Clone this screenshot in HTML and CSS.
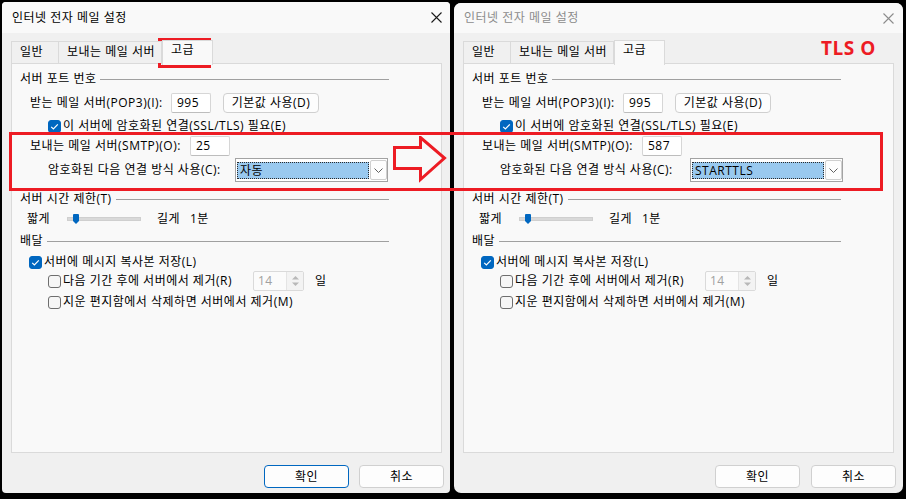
FILE: index.html
```html
<!DOCTYPE html>
<html lang="ko">
<head>
<meta charset="utf-8">
<title>인터넷 전자 메일 설정</title>
<link rel="stylesheet" href="styles.css">
</head>
<body>
<div class="screen">
  <section class="dialog dlg-left">
    <header class="titlebar">
      <span class="title">인터넷 전자 메일 설정</span>
      <svg class="close" width="11" height="11" viewBox="0 0 11 11"><path d="M0.5 0.5L10.5 10.5M10.5 0.5L0.5 10.5" stroke="currentColor" stroke-width="1.1" fill="none"/></svg>
    </header>
    <nav class="tabs">
      <div class="tab w1">일반</div>
      <div class="tab w2">보내는 메일 서버</div>
      <div class="tab w3 sel">고급</div>
    </nav>
    <div class="panel">
      <div class="content">
        <div class="group g1"><span class="gl">서버 포트 번호</span><i class="rule"></i></div>
        <div class="row r-pop"><span class="lab lw-pop">받는 메일 서버(POP3)(I):</span><span class="input">995</span><span class="btn defbtn">기본값 사용(D)</span></div>
        <div class="row r-ssl"><span class="chk on"><svg width="13" height="13" viewBox="0 0 13 13"><path d="M3.2 6.8L5.4 9L9.8 4.4" stroke="#fff" stroke-width="1.2" fill="none"/></svg></span><span class="ct">이 서버에 암호화된 연결(SSL/TLS) 필요(E)</span></div>
        <div class="row r-smtp"><span class="lab lw-smtp">보내는 메일 서버(SMTP)(O):</span><span class="input">25</span></div>
        <div class="row r-enc"><span class="lab lw-enc">암호화된 다음 연결 방식 사용(C):</span>
          <span class="combo"><span class="csel">자동</span><span class="cbtn"><svg width="9" height="5" viewBox="0 0 9 5"><path d="M0.5 0.5L4.5 4.5L8.5 0.5" stroke="#606060" stroke-width="1" fill="none"/></svg></span></span>
        </div>
        <div class="group g2"><span class="gl">서버 시간 제한(T)</span><i class="rule"></i></div>
        <div class="row r-slider"><span class="sl-a">짧게</span><span class="track"><svg class="thumb" width="6" height="10" viewBox="0 0 6 10"><path d="M0 1Q0 0 1 0H5Q6 0 6 1V7L3 10L0 7Z" fill="#0067c0"/></svg></span><span class="sl-b">길게</span><span>1분</span></div>
        <div class="group g3"><span class="gl">배달</span><i class="rule"></i></div>
        <div class="row r-keep"><span class="chk on"><svg width="13" height="13" viewBox="0 0 13 13"><path d="M3.2 6.8L5.4 9L9.8 4.4" stroke="#fff" stroke-width="1.2" fill="none"/></svg></span><span class="ct">서버에 메시지 복사본 저장(L)</span></div>
        <div class="row r-rem"><span class="chk"></span><span class="ct lw-rem">다음 기간 후에 서버에서 제거(R)</span><span class="spin"><span class="sv">14</span><span class="sbtns"><svg width="9" height="5" viewBox="0 0 9 5"><path d="M1 4.5L4.5 1L8 4.5Z" fill="#b8b8b8"/></svg><svg width="9" height="5" viewBox="0 0 9 5"><path d="M1 0.5L4.5 4L8 0.5Z" fill="#b8b8b8"/></svg></span></span><span class="day">일</span></div>
        <div class="row r-del"><span class="chk"></span><span class="ct">지운 편지함에서 삭제하면 서버에서 제거(M)</span></div>
      </div>
    </div>
    <footer class="footer"><span class="btn okbtn primary">확인</span><span class="btn okbtn">취소</span></footer>
  </section>

  <section class="dialog dlg-right inactive">
    <header class="titlebar">
      <span class="title">인터넷 전자 메일 설정</span>
      <svg class="close" width="11" height="11" viewBox="0 0 11 11"><path d="M0.5 0.5L10.5 10.5M10.5 0.5L0.5 10.5" stroke="currentColor" stroke-width="1.1" fill="none"/></svg>
    </header>
    <nav class="tabs">
      <div class="tab w1">일반</div>
      <div class="tab w2">보내는 메일 서버</div>
      <div class="tab w3 sel">고급</div>
    </nav>
    <div class="panel">
      <div class="content">
        <div class="group g1"><span class="gl">서버 포트 번호</span><i class="rule"></i></div>
        <div class="row r-pop"><span class="lab lw-pop">받는 메일 서버(POP3)(I):</span><span class="input">995</span><span class="btn defbtn">기본값 사용(D)</span></div>
        <div class="row r-ssl"><span class="chk on"><svg width="13" height="13" viewBox="0 0 13 13"><path d="M3.2 6.8L5.4 9L9.8 4.4" stroke="#fff" stroke-width="1.2" fill="none"/></svg></span><span class="ct">이 서버에 암호화된 연결(SSL/TLS) 필요(E)</span></div>
        <div class="row r-smtp"><span class="lab lw-smtp">보내는 메일 서버(SMTP)(O):</span><span class="input">587</span></div>
        <div class="row r-enc"><span class="lab lw-enc">암호화된 다음 연결 방식 사용(C):</span>
          <span class="combo combo-r"><span class="csel">STARTTLS</span><span class="cbtn"><svg width="9" height="5" viewBox="0 0 9 5"><path d="M0.5 0.5L4.5 4.5L8.5 0.5" stroke="#606060" stroke-width="1" fill="none"/></svg></span></span>
        </div>
        <div class="group g2"><span class="gl">서버 시간 제한(T)</span><i class="rule"></i></div>
        <div class="row r-slider"><span class="sl-a">짧게</span><span class="track"><svg class="thumb" width="6" height="10" viewBox="0 0 6 10"><path d="M0 1Q0 0 1 0H5Q6 0 6 1V7L3 10L0 7Z" fill="#0067c0"/></svg></span><span class="sl-b">길게</span><span>1분</span></div>
        <div class="group g3"><span class="gl">배달</span><i class="rule"></i></div>
        <div class="row r-keep"><span class="chk on"><svg width="13" height="13" viewBox="0 0 13 13"><path d="M3.2 6.8L5.4 9L9.8 4.4" stroke="#fff" stroke-width="1.2" fill="none"/></svg></span><span class="ct">서버에 메시지 복사본 저장(L)</span></div>
        <div class="row r-rem"><span class="chk"></span><span class="ct lw-rem">다음 기간 후에 서버에서 제거(R)</span><span class="spin"><span class="sv">14</span><span class="sbtns"><svg width="9" height="5" viewBox="0 0 9 5"><path d="M1 4.5L4.5 1L8 4.5Z" fill="#b8b8b8"/></svg><svg width="9" height="5" viewBox="0 0 9 5"><path d="M1 0.5L4.5 4L8 0.5Z" fill="#b8b8b8"/></svg></span></span><span class="day">일</span></div>
        <div class="row r-del"><span class="chk"></span><span class="ct">지운 편지함에서 삭제하면 서버에서 제거(M)</span></div>
      </div>
    </div>
    <footer class="footer"><span class="btn okbtn">확인</span><span class="btn okbtn">취소</span></footer>
  </section>

  <div class="mark mark-tab"></div>
  <div class="mark mark-rows"></div>
  <svg class="mark-arrow" width="56" height="48" viewBox="0 0 56 48"><path d="M3.5 11.5H29.5V1.5L53.5 22L29.5 43.5V32.5H3.5Z" stroke="#ed1c24" stroke-width="3" fill="none"/></svg>
  <div class="mark-text">TLS O</div>
</div>
</body>
</html>
```

FILE: styles.css
```css
* { box-sizing: border-box; }
html, body { margin: 0; padding: 0; }
body {
  background: #000;
  width: 906px;
  height: 499px;
  overflow: hidden;
  font-family: "Open Sans", "Noto Sans CJK KR", sans-serif;
  font-size: 12px;
  line-height: 16px;
  letter-spacing: 0.5px;
  color: #000;
}
.screen {
  position: relative;
  width: 906px;
  height: 499px;
  display: flex;
  align-items: flex-start;
  padding: 2px 0 0 2px;
  gap: 4px;
}
.dialog {
  display: flex;
  flex-direction: column;
  background: #f0f0f0;
  width: 448px;
  height: 491px;
  border-radius: 4px;
  overflow: hidden;
}
.dlg-right {
  width: 449px;
  height: 490px;
  margin-top: 1px;
  border-radius: 7px;
}
.titlebar {
  height: 31px;
  flex: none;
  background: #f9f9f9;
  display: flex;
  align-items: center;
  justify-content: space-between;
  padding: 0 8px 0 10px;
}
.dlg-right .titlebar { height: 30px; padding-right: 9px; }
.title { font-size: 12px; }
.close { color: #1a1a1a; }
.inactive .title { color: #8c8c8c; }
.inactive .close { color: #8c8c8c; }

.tabs {
  height: 32px;
  flex: none;
  display: flex;
  align-items: flex-end;
  padding-left: 9px;
  margin-bottom: -2px;
  position: relative;
  z-index: 1;
}
.tab {
  height: 22px;
  margin-bottom: 2px;
  border: 1px solid #dadada;
  border-bottom: none;
  background: #f0f0f0;
  padding: 2px 0 0 8px;
  line-height: 16px;
  white-space: nowrap;
}
.tab + .tab { border-left: none; }
.w1 { width: 48px; }
.w2 { width: 103px; }
.w3 { width: 51px; }
.tab.sel {
  height: 25px;
  margin-bottom: 0;
  background: #f9f9f9;
  border-left: 1px solid #dadada;
  padding-top: 1px;
  padding-left: 8px;
}
.panel {
  flex: none;
  height: 390px;
  margin: 0 8px 0 9px;
  background: #f9f9f9;
  border: 1px solid #dadada;
}
.dlg-right .panel { margin-right: 9px; }
.content {
  width: 377px;
  padding-left: 8px;
}
.group {
  display: flex;
  align-items: center;
  height: 16px;
}
.gl { white-space: nowrap; }
.rule {
  flex: 1;
  height: 1px;
  background: #a0a0a0;
  margin-left: 4px;
  margin-top: 1px;
}
.g1 { margin-top: 7px; }
.g2 { margin-top: 9px; }
.g3 { margin-top: 6px; }
.row { display: flex; align-items: center; }
.r-pop { height: 20px; margin-top: 6px; padding-left: 10px; }
.r-ssl { height: 16px; margin-top: 5px; padding-left: 28px; }
.r-smtp { height: 20px; margin-top: 2px; padding-left: 10px; }
.r-enc { height: 24px; margin-top: 2px; padding-left: 28px; }
.r-slider { height: 16px; margin-top: 4px; padding-left: 7px; }
.r-keep { height: 16px; margin-top: 5px; padding-left: 9px; }
.r-rem { height: 20px; margin-top: 1px; padding-left: 28px; }
.r-del { height: 16px; margin-top: 3px; padding-left: 28px; }

.lab { flex: none; white-space: nowrap; }
.lw-pop { width: 141px; }
.lw-smtp { width: 160px; }
.lw-enc { width: 187px; }
.input {
  width: 40px;
  height: 20px;
  background: #fff;
  border: 1px solid #d6d6d6;
  border-bottom-color: #bdbdbd;
  border-radius: 2px;
  padding: 1px 0 0 5px;
  line-height: 16px;
}
.btn {
  display: flex;
  align-items: center;
  justify-content: center;
  background: #fdfdfd;
  border: 1px solid #d0d0d0;
  border-radius: 4px;
  white-space: nowrap;
}
.defbtn { width: 96px; height: 20px; margin-left: 12px; }
.chk {
  flex: none;
  width: 13px;
  height: 13px;
  border: 1px solid #6e6e6e;
  border-radius: 3px;
  background: #f6f6f6;
  margin-right: 2px;
  position: relative;
}
.chk.on { background: #0067c0; border-color: #0067c0; }
.chk svg { position: absolute; left: -1px; top: -1px; }
.ct { white-space: nowrap; }
.combo {
  width: 153px;
  height: 24px;
  border: 1px solid #a3a3a3;
  background: #fff;
  display: flex;
  align-items: center;
  padding: 0 1px 0 1px;
}
.combo-r { margin-left: 3px; }
.csel {
  flex: none;
  width: 132px;
  height: 17px;
  background: #99c9ef;
  border: 1px dotted #2b2b2b;
  line-height: 15px;
  padding-left: 2px;
}
.cbtn {
  flex: none;
  width: 17px;
  height: 20px;
  margin-left: 1px;
  border: 1px solid #cfcfcf;
  border-radius: 2px;
  background: #fdfdfd;
  display: flex;
  align-items: center;
  justify-content: center;
}
.sl-a { width: 40px; }
.track {
  width: 74px;
  height: 4px;
  background: #d9d9d9;
  border: 1px solid #cfcfcf;
  position: relative;
}
.thumb { position: absolute; left: 5px; top: -4px; }
.sl-b { margin-left: 16px; width: 33px; }
.lw-rem { width: 190px; }
.spin {
  width: 51px;
  height: 20px;
  border: 1px solid #dadada;
  border-radius: 2px;
  background: #fbfbfb;
  display: flex;
  justify-content: space-between;
}
.sv { color: #a0a0a0; padding: 1px 0 0 4px; }
.sbtns {
  width: 17px;
  display: flex;
  flex-direction: column;
  justify-content: center;
  align-items: center;
  gap: 2px;
  border-left: 1px solid #e4e4e4;
  background: #f3f3f3;
}
.day { margin-left: 11px; }

.footer {
  flex: 1;
  display: flex;
  justify-content: flex-end;
  align-items: flex-start;
  padding: 12px 6px 0 0;
  gap: 10px;
}
.dlg-right .footer { padding-right: 7px; gap: 11px; padding-top: 12px; }
.okbtn { width: 85px; height: 23px; }
.primary { border-color: #0067c0; }

.mark { position: absolute; border: 3px solid #ed1c24; }
.mark-tab { left: 158px; top: 38px; width: 53px; height: 30px; }
.mark-rows { left: 9px; top: 132px; width: 874px; height: 59px; }
.mark-arrow { position: absolute; left: 391px; top: 136px; }
.mark-text {
  position: absolute;
  left: 821px;
  top: 36px;
  font-family: "Open Sans", sans-serif;
  font-weight: 700;
  font-size: 19px;
  line-height: 24px;
  color: #ed1c24;
  letter-spacing: 0.5px;
}
```
